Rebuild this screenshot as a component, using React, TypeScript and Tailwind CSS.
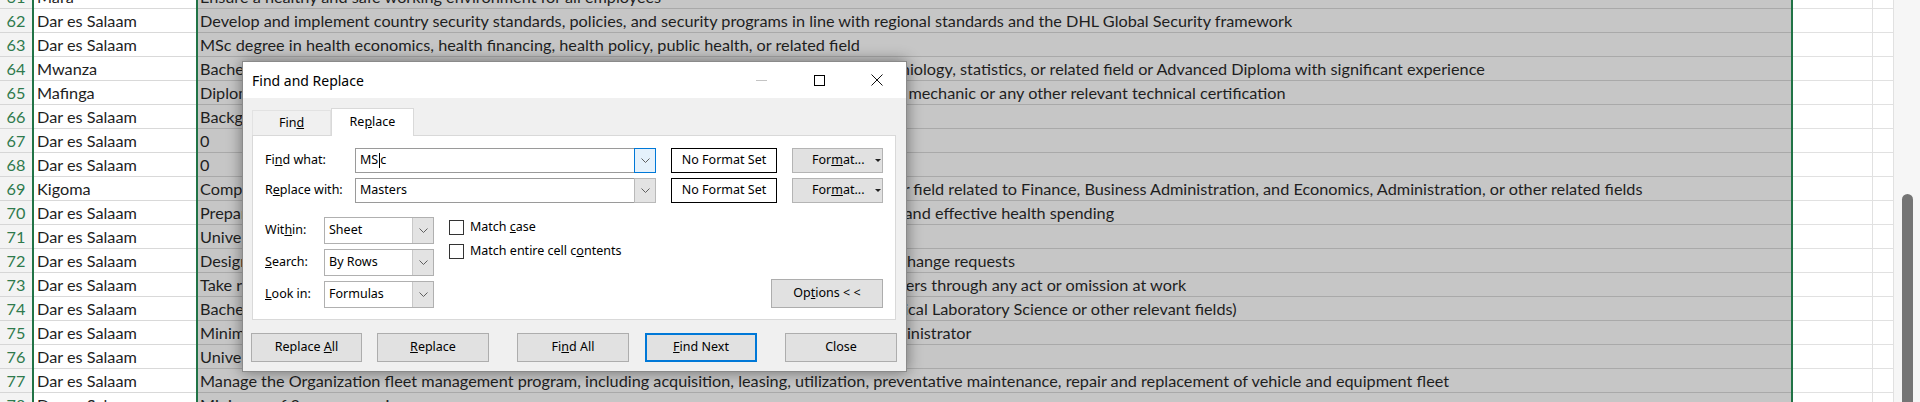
const rows: [number, string, string][] = [
  [61, 'Mara', 'Ensure a healthy and safe working environment for all employees'],
  [62, 'Dar es Salaam', 'Develop and implement country security standards, policies, and security programs in line with regional standards and the DHL Global Security framework'],
  [63, 'Dar es Salaam', 'MSc degree in health economics, health financing, health policy, public health, or related field'],
  [64, 'Mwanza', "Bachelor's degree in Public Health, Demography, Health Informatics, Biostatistics, Medicine, Epidemiology, statistics, or related field or Advanced Diploma with significant experience"],
  [65, 'Mafinga', 'Diploma in Mechanical Engineering, Motor Vehicle Mechanics, Trade Test Grade III in auto electrical mechanic or any other relevant technical certification'],
  [66, 'Dar es Salaam', 'Background in logistics or supply chain'],
  [67, 'Dar es Salaam', '0'],
  [68, 'Dar es Salaam', '0'],
  [69, 'Kigoma', 'Completed University degree in Accounting, Economics, Business Studies, Procurement or any other field related to Finance, Business Administration, and Economics, Administration, or other related fields'],
  [70, 'Dar es Salaam', 'Prepare and support the implementation of evidence-based policies to promote efficient, equitable and effective health spending'],
  [71, 'Dar es Salaam', 'University degree in a relevant field'],
  [72, 'Dar es Salaam', 'Design, develop and maintain system applications including bug fixes, updates, enhancements and change requests'],
  [73, 'Dar es Salaam', 'Take reasonable care for his own health and safety and not to endanger the health and safety of others through any act or omission at work'],
  [74, 'Dar es Salaam', "Bachelor's Degree in Medical Laboratory Sciences or Advanced Diploma in Biomedical Science (Clinical Laboratory Science or other relevant fields)"],
  [75, 'Dar es Salaam', 'Minimum of 5 years of relevant work experience in IT infrastructure management as a Systems Administrator'],
  [76, 'Dar es Salaam', 'University degree in Human Resources'],
  [77, 'Dar es Salaam', 'Manage the Organization fleet management program, including acquisition, leasing, utilization, preventative maintenance, repair and replacement of vehicle and equipment fleet'],
  [78, 'Dar es Salaam', 'Minimum of 3 years experience'],
];

function Chevron() {
  return (
    <svg width="9" height="5" viewBox="0 0 9 5">
      <path d="M0.5 0.5 L4.5 4.5 L8.5 0.5" fill="none" stroke="#5f5f5f" strokeWidth="1" />
    </svg>
  );
}

function Row({ n, city, text }: { n: number; city: string; text: string }) {
  return (
    <div className="flex h-6 shrink-0 leading-[23px]">
      <div className="w-[32px] border-b border-[#d6d6d6] bg-[#f3f3f3] text-center text-[#2f7a4d]">{n}</div>
      <div className="w-[2px] bg-[#217346]" />
      <div className="w-[162px] overflow-hidden whitespace-nowrap border-b border-[#d9d9d9] pl-[3px]">{city}</div>
      <div className="w-[2px] bg-[#217346]" />
      <div className="w-[1593px] overflow-hidden whitespace-nowrap border-b border-[#a9a9a9] bg-[#c6c6c6] pl-[2px]">{text}</div>
      <div className="w-[2px] bg-[#217346]" />
      <div className="w-[80px] border-b border-r border-[#e1e1e1]" />
      <div className="w-[21px] border-b border-r border-[#e1e1e1]" />
    </div>
  );
}

function ComboRow({ label, value, active }: { label: React.ReactNode; value: React.ReactNode; active?: boolean }) {
  return (
    <div className="flex h-[25px] items-center">
      <div className="w-[90px]">{label}</div>
      <div className="flex h-full w-[301px] border border-[#9a9a9a] bg-white">
        <div className="flex flex-1 items-center pl-[4px]">{value}</div>
        <div
          className={
            active
              ? '-my-px -mr-px flex w-[22px] items-center justify-center border border-[#0078d7] bg-[#e5f1fb]'
              : '-my-px -mr-px flex w-[22px] items-center justify-center border border-[#b9b9b9] bg-[#e3e3e3]'
          }
        >
          <Chevron />
        </div>
      </div>
      <div className="ml-[15px] flex h-full w-[106px] items-center justify-center border border-black bg-white">
        No Format Set
      </div>
      <div className="ml-[15px] flex h-full w-[91px] items-center border border-[#b4b4b4] bg-[#e1e1e1] pl-[19px]">
        <span>
          For<u className="underline">m</u>at...
        </span>
        <svg width="6" height="3" viewBox="0 0 6 3" className="ml-[10px]">
          <path d="M0 0 L6 0 L3 3 Z" fill="#222" />
        </svg>
      </div>
    </div>
  );
}

function SelectRow({ label, value }: { label: React.ReactNode; value: string }) {
  return (
    <div className="flex h-[27px] items-center">
      <div className="w-[59px]">{label}</div>
      <div className="flex h-full w-[110px] border border-[#b0b0b0] bg-white">
        <div className="flex flex-1 items-center pl-[4px]">{value}</div>
        <div className="flex w-[21px] items-center justify-center border-l border-[#c8c8c8] bg-[#e3e3e3]">
          <Chevron />
        </div>
      </div>
    </div>
  );
}

function Check({ children }: { children: React.ReactNode }) {
  return (
    <div className="flex h-[15px] items-center gap-[6px]">
      <div className="h-[15px] w-[15px] border border-[#333] bg-white" />
      <span>{children}</span>
    </div>
  );
}

function Btn({ children, w, primary }: { children: React.ReactNode; w: string; primary?: boolean }) {
  return (
    <div
      className={`flex h-[29px] ${w} items-center justify-center bg-[#e1e1e1] ${
        primary ? 'border-2 border-[#0078d7]' : 'border border-[#adadad]'
      }`}
    >
      {children}
    </div>
  );
}

function Dialog() {
  return (
    <div className="absolute left-[242px] top-[61px] flex h-[311px] w-[665px] flex-col border border-[#8a8a8a] bg-[#f0f0f0] font-['Noto_Sans',sans-serif] text-[12.5px] text-black shadow-[0_0_14px_rgba(0,0,0,0.45)]">
      <div className="flex h-9 shrink-0 items-center bg-white">
        <span className="pl-[9px] text-[14px]">Find and Replace</span>
        <div className="ml-auto flex h-full">
          <div className="flex w-[58px] items-center justify-center">
            <div className="h-px w-[11px] bg-[#c4c4c4]" />
          </div>
          <div className="flex w-[58px] items-center justify-center">
            <div className="h-[11px] w-[11px] border border-black" />
          </div>
          <div className="flex w-[58px] items-center justify-center">
            <svg width="12" height="12" viewBox="0 0 12 12">
              <path d="M0.5 0.5 L11.5 11.5 M11.5 0.5 L0.5 11.5" stroke="#111" strokeWidth="1" />
            </svg>
          </div>
        </div>
      </div>

      <div className="flex flex-1 flex-col px-[9px] pt-[10px]">
        <div className="flex h-[28px] items-end">
          <div className="flex h-[26px] w-[79px] items-center justify-center border border-b-0 border-[#e2e2e2]">
            Fin<u className="underline">d</u>
          </div>
          <div className="relative z-10 flex h-[28px] w-[83px] items-center justify-center border border-b-0 border-[#d9d9d9] bg-white">
            Re<u className="underline">p</u>lace
          </div>
        </div>

        <div className="-mt-px flex w-[644px] flex-col border border-[#d9d9d9] bg-white px-[12px] pb-[11px] pt-[12px]">
          <ComboRow
            active
            label={
              <>
                Fi<u className="underline">n</u>d what:
              </>
            }
            value={
              <>
                MS
                <span className="mx-[0.5px] inline-block h-[15px] w-px bg-black" />c
              </>
            }
          />
          <div className="mt-[5px]">
            <ComboRow
              label={
                <>
                  R<u className="underline">e</u>place with:
                </>
              }
              value="Masters"
            />
          </div>

          <div className="mt-[14px] flex items-end">
            <div className="flex flex-col gap-[5px]">
              <SelectRow
                label={
                  <>
                    Wit<u className="underline">h</u>in:
                  </>
                }
                value="Sheet"
              />
              <SelectRow
                label={
                  <>
                    <u className="underline">S</u>earch:
                  </>
                }
                value="By Rows"
              />
              <SelectRow
                label={
                  <>
                    <u className="underline">L</u>ook in:
                  </>
                }
                value="Formulas"
              />
            </div>
            <div className="ml-[15px] flex flex-col gap-[9px] self-start pt-[3px]">
              <Check>
                Match <u className="underline">c</u>ase
              </Check>
              <Check>
                Match entire cell c<u className="underline">o</u>ntents
              </Check>
            </div>
            <div className="ml-auto">
              <Btn w="w-[112px]">
                <span>
                  Op<u className="underline">t</u>ions &lt; &lt;
                </span>
              </Btn>
            </div>
          </div>
        </div>

        <div className="-ml-px mt-[13px] flex">
          <Btn w="w-[112px]">
            <span>
              Replace <u className="underline">A</u>ll
            </span>
          </Btn>
          <div className="ml-[15px]">
            <Btn w="w-[112px]">
              <span>
                <u className="underline">R</u>eplace
              </span>
            </Btn>
          </div>
          <div className="ml-[28px]">
            <Btn w="w-[112px]">
              <span>
                Fi<u className="underline">n</u>d All
              </span>
            </Btn>
          </div>
          <div className="ml-[16px]">
            <Btn w="w-[112px]" primary>
              <span>
                <u className="underline">F</u>ind Next
              </span>
            </Btn>
          </div>
          <div className="ml-[28px]">
            <Btn w="w-[112px]">Close</Btn>
          </div>
        </div>
      </div>
    </div>
  );
}

export default function App() {
  return (
    <div className="relative flex h-[402px] w-[1920px] overflow-hidden bg-white font-['Lato',sans-serif] text-[16.25px] text-[#1e1e1e]">
      <div className="-mt-[15px] flex w-[1894px] flex-col">
        {rows.map(([n, city, text]) => (
          <Row key={n} n={n} city={city} text={text} />
        ))}
      </div>
      <div className="w-[26px] bg-[#f6f6f6] pl-[8px] pt-[194px]">
        <div className="h-[240px] w-[11px] rounded-full bg-[#757575]" />
      </div>
      <Dialog />
    </div>
  );
}
